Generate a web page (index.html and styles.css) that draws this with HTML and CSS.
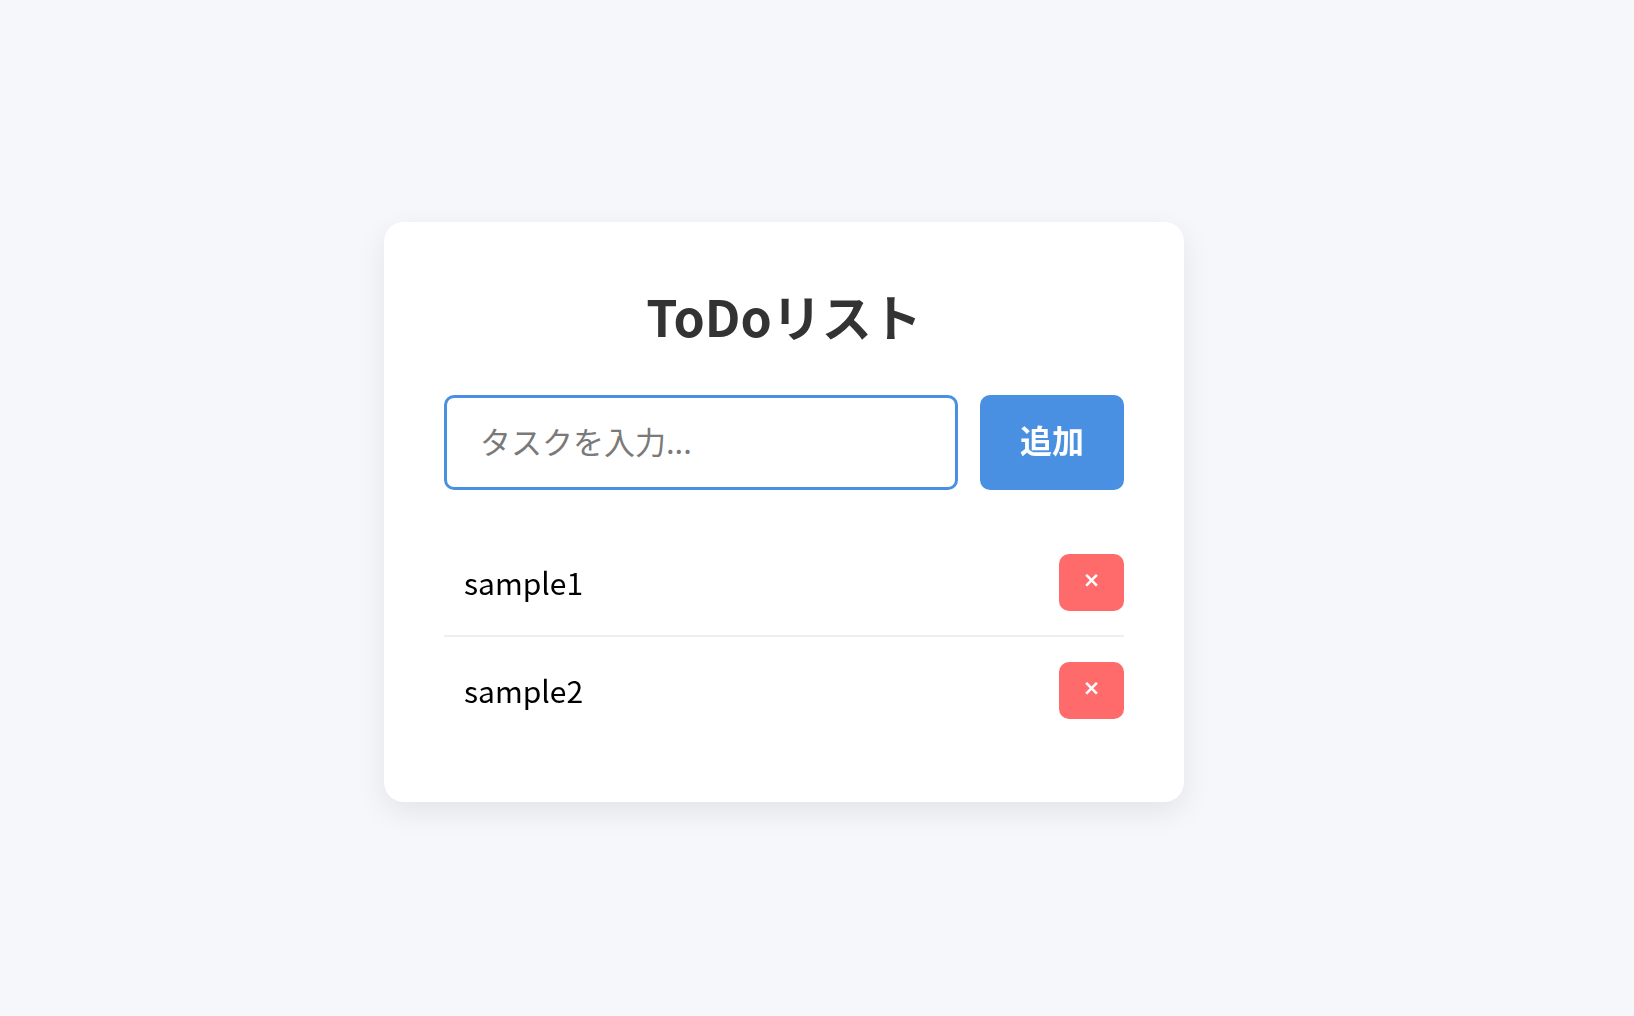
FILE: index.html
```html
<!DOCTYPE html>
<html lang="ja">
<head>
<meta charset="utf-8">
<title>ToDoリスト</title>
<link rel="stylesheet" href="styles.css">
</head>
<body>
<main class="page">
  <section class="card">
    <h1 class="title">ToDoリスト</h1>
    <form class="add-form" onsubmit="return false;">
      <input class="task-input" type="text" placeholder="タスクを入力..." autofocus>
      <button class="add-btn" type="submit">追加</button>
    </form>
    <ul class="task-list">
      <li class="task-item">
        <span class="task-text">sample1</span>
        <button class="del-btn" type="button">×</button>
      </li>
      <li class="task-item">
        <span class="task-text">sample2</span>
        <button class="del-btn" type="button">×</button>
      </li>
    </ul>
  </section>
</main>
</body>
</html>
```
FILE: styles.css
```css
* {
  box-sizing: border-box;
}

html, body {
  margin: 0;
  padding: 0;
}

body {
  background: #f5f7fa;
  font-family: "Noto Sans CJK JP", "Noto Sans", sans-serif;
}

.page {
  min-height: 100vh;
  display: flex;
  align-items: center;
  justify-content: center;
  padding: 7px 66px 0 0;
}

.card {
  width: 800px;
  background: #ffffff;
  border-radius: 20px;
  box-shadow: 0 10px 30px rgba(0, 0, 0, 0.08);
  padding: 63px 60px 59px;
}

.title {
  margin: 0 0 50px;
  font-size: 50px;
  line-height: 60px;
  font-weight: 700;
  color: #333333;
  text-align: center;
}

.add-form {
  display: flex;
  gap: 22px;
  margin: 0 0 39px;
}

.task-input {
  flex: 1;
  height: 95px;
  border: 3px solid #4a90e2;
  border-radius: 10px;
  padding: 0 30px 4px 33px;
  font-family: inherit;
  font-size: 31px;
  color: #333333;
  outline: none;
  caret-color: #000000;
}

.task-input::placeholder {
  color: #7a7a7a;
}

.add-btn {
  width: 144px;
  height: 95px;
  border: none;
  border-radius: 10px;
  background: #4a90e2;
  color: #ffffff;
  font-family: inherit;
  font-size: 32px;
  font-weight: 700;
  line-height: 1;
  padding: 0 0 6px;
  cursor: pointer;
}

.task-list {
  list-style: none;
  margin: 0;
  padding: 0;
}

.task-item {
  display: flex;
  align-items: center;
  justify-content: space-between;
  padding: 25px 0 24px 20px;
  border-bottom: 2px solid #eeeeee;
}

.task-item:last-child {
  border-bottom: none;
}

.task-text {
  font-size: 30px;
  color: #000000;
}

.del-btn {
  width: 65px;
  height: 57px;
  border: none;
  border-radius: 10px;
  background: #ff6b6b;
  color: #ffffff;
  font-family: "DejaVu Sans", sans-serif;
  font-size: 21px;
  font-weight: 700;
  line-height: 1;
  padding: 0 0 3px;
  cursor: pointer;
}
```
